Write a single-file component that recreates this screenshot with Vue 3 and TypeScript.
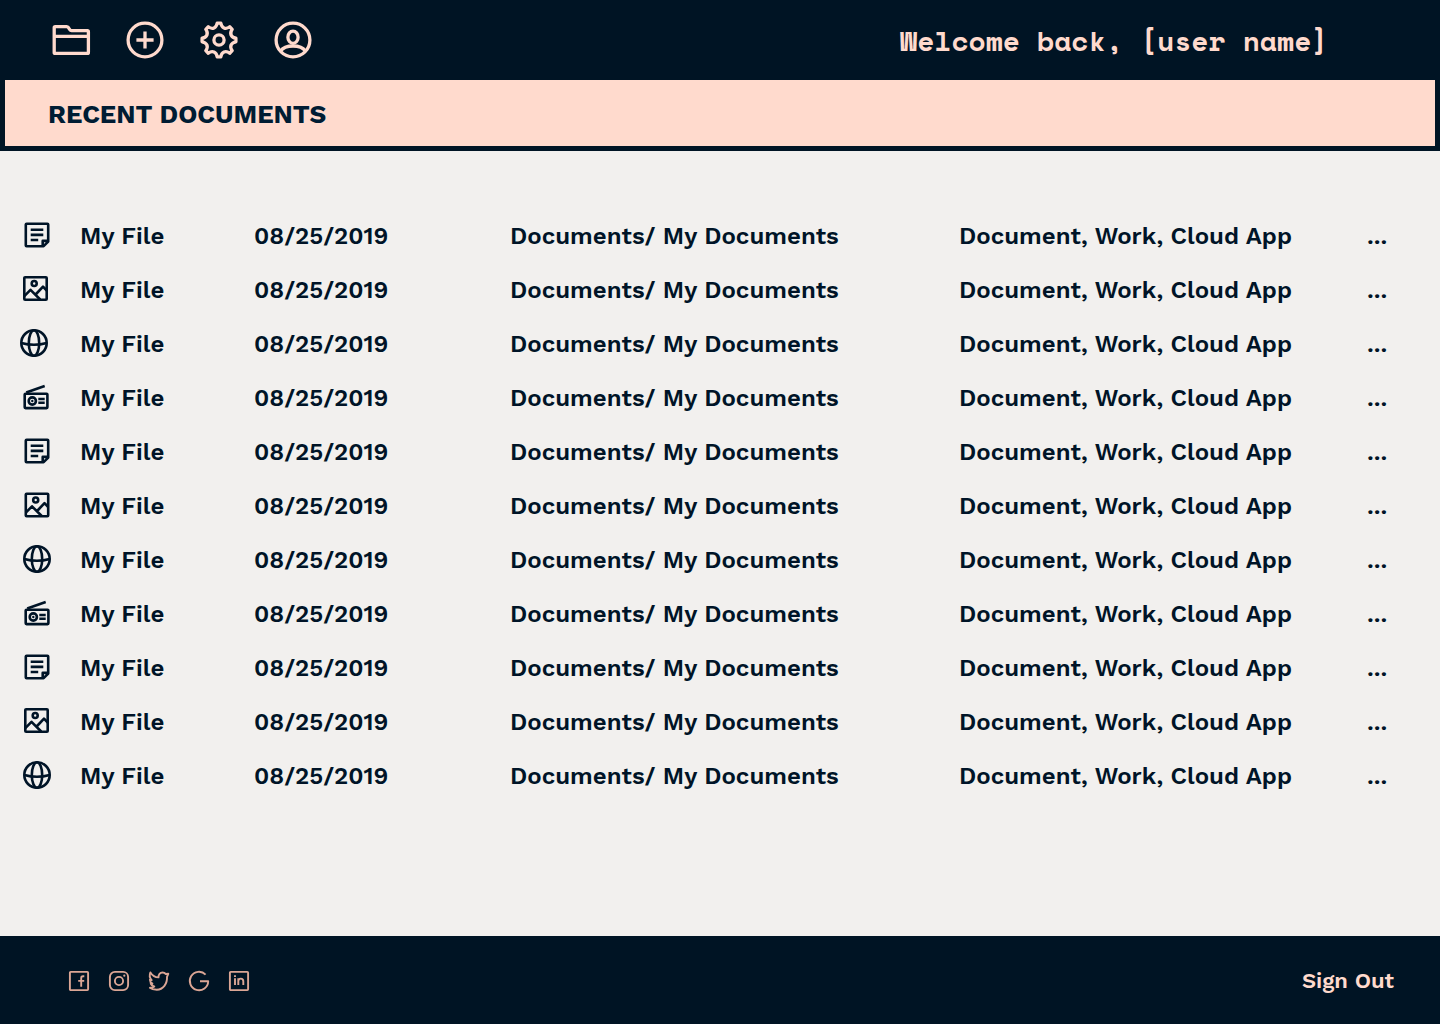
<script setup lang="ts">
type FileKind = 'note' | 'image' | 'web' | 'radio'

interface FileRow {
  kind: FileKind
  dx: number
  dy: number
}

const rows: FileRow[] = [
  { kind: 'note', dx: 0, dy: 0 },
  { kind: 'image', dx: -1.5, dy: -0.5 },
  { kind: 'web', dx: -3, dy: 0 },
  { kind: 'radio', dx: -1, dy: 0.3 },
  { kind: 'note', dx: 0, dy: 0 },
  { kind: 'image', dx: 0, dy: 0 },
  { kind: 'web', dx: 0, dy: 0 },
  { kind: 'radio', dx: 0, dy: 0.3 },
  { kind: 'note', dx: 0, dy: 0 },
  { kind: 'image', dx: -0.5, dy: -0.5 },
  { kind: 'web', dx: 0, dy: 0 },
]

// Eight-toothed cog outline centred in a 48px box
function cogPath(): string {
  const at = (deg: number, r: number) => {
    const a = ((deg - 90) * Math.PI) / 180
    return `${(24 + r * Math.cos(a)).toFixed(2)} ${(24 + r * Math.sin(a)).toFixed(2)}`
  }
  let d = `M${at(-6, 17)}`
  for (let i = 0; i < 8; i++) {
    const t = i * 45
    d += `L${at(t + 6, 17)}C${at(t + 12, 12.2)} ${at(t + 33, 12.2)} ${at(t + 39, 17)}`
  }
  return d + 'Z'
}
const cog = cogPath()
</script>

<template>
  <div class="page">
    <header class="topbar">
      <nav class="tools">
        <svg viewBox="0 0 48 48"><path d="M8.2 10.700H19.600Q20.700 10.700 21.400 11.600L22.800 13.600Q23.400 14.600 24.600 14.600H40.400Q41.400 14.600 41.400 15.600V36.400Q41.400 37.400 40.400 37.400H8.200Q7.200 37.400 7.200 36.400V11.700Q7.200 10.700 8.200 10.700ZM7.200 20.400H41.400" /></svg>
        <svg viewBox="0 0 48 48"><circle cx="24" cy="24" r="16.9" /><path d="M24 15.4V32.6M15.4 24H32.6" /></svg>
        <svg viewBox="0 0 48 48"><path :d="cog" /><circle cx="24" cy="24" r="5.1" /></svg>
        <svg viewBox="0 0 48 48"><circle cx="24" cy="24" r="16.9" /><ellipse cx="24" cy="21.2" rx="5.1" ry="6.1" /><path d="M11.5 35.2C14 31.5 18.5 30 24 30S34 31.5 36.5 35.2" /></svg>
      </nav>
      <p class="welcome">Welcome back, [user name]</p>
    </header>

    <section class="banner"><h1>RECENT DOCUMENTS</h1></section>

    <main class="files">
      <div v-for="(row, i) in rows" :key="i" class="row">
        <svg class="kind" viewBox="0 0 32 32" :style="{ transform: `translate(${row.dx}px, ${row.dy}px)` }">
          <template v-if="row.kind === 'note'">
            <path d="M5.6 4.8H26.400Q27.200 4.800 27.200 5.600V22.6L22.6 27.2H5.600Q4.800 27.200 4.800 26.400V5.600Q4.800 4.800 5.600 4.800ZM21.7 27.2V21.9H27.2" />
            <path d="M9.7 10.7H22.3M9.7 15.9H22.3M9.7 21H17.2" />
          </template>
          <template v-else-if="row.kind === 'image'">
            <rect x="4.8" y="4.8" width="22.4" height="22.4" rx="0.8" />
            <circle cx="14.7" cy="11" r="2.5" />
            <path d="M4.8 23.7L11 17.3L20.7 27M16.6 21.5L23.5 14.2L27.2 18" />
          </template>
          <template v-else-if="row.kind === 'web'">
            <circle cx="16" cy="16" r="12.7" />
            <ellipse cx="16" cy="16" rx="5.2" ry="12.7" />
            <path d="M3.3 16Q16 19.6 28.7 16" />
          </template>
          <template v-else>
            <rect x="4.7" y="12.4" width="22.7" height="14.4" rx="0.8" />
            <path d="M6.2 11.1L24.7 4.6" />
            <circle cx="12.3" cy="19.7" r="3.6" />
            <circle class="dot" cx="12.3" cy="19.7" r="1.2" />
            <path d="M18.3 17.7H24.7M18.3 21.5H24.7" />
          </template>
        </svg>
        <span class="name">My File</span>
        <span class="date">08/25/2019</span>
        <span class="path">Documents/ My Documents</span>
        <span class="tags">Document, Work, Cloud App</span>
        <span class="more">...</span>
      </div>
    </main>

    <footer class="footer">
      <div class="social">
        <svg viewBox="0 0 24 24"><rect x="2.9" y="2.9" width="18.2" height="18.2" rx="0.8" /><path d="M17.3 7.3H16C14.8 7.3 14.2 8 14.2 9.2V17.8M11.2 11.9H17.2" /></svg>
        <svg viewBox="0 0 24 24"><rect x="2.9" y="2.9" width="18.2" height="18.2" rx="5" /><circle cx="12" cy="12" r="4.1" /><circle class="dot" cx="17.3" cy="6.7" r="1.1" /></svg>
        <svg viewBox="0 0 24 24"><path d="M3.4 3.4C5.4 6.5 8.3 8.2 11.5 8.4C11.3 5.3 13.1 3.5 15.5 3.5C17 3.5 18 4.1 18.8 5L21.3 4.8L20 7.8C20.5 14.8 16 20.7 9.8 20.7C7 20.7 4.5 20.2 2.9 18.8C4.4 18.9 6 18.5 7.3 17.5C5.5 17.1 4.2 16.2 3.7 14.7H5.4C3.8 13.8 2.9 12.4 2.9 10.7L4.7 11.1C2.6 9 2.3 6 3.4 3.4Z" /></svg>
        <svg viewBox="0 0 24 24"><path d="M18.6 5.6A9.2 9.2 0 1 0 21.2 12.2H13" /></svg>
        <svg viewBox="0 0 24 24"><rect x="2.9" y="2.9" width="18.2" height="18.2" rx="0.8" /><path d="M8 9.3V16M8 6.3V7.9M11.3 9.3V16M11.3 12.3C11.3 8.7 16.3 8.7 16.3 12.3V16" /></svg>
      </div>
      <a class="signout">Sign Out</a>
    </footer>
  </div>
</template>

<style>
body { margin: 0; }
</style>

<style scoped>
.page {
  width: 1440px;
  height: 1024px;
  display: flex;
  flex-direction: column;
  background: #f2f0ee;
  color: #001427;
  font-family: "Work Sans", Inter, sans-serif;
  overflow: hidden;
}
.topbar {
  height: 80px;
  flex: none;
  box-sizing: border-box;
  padding: 0 111px 0 47px;
  display: flex;
  align-items: center;
  justify-content: space-between;
  background: #001424;
}
.tools { display: flex; gap: 26px; }
.tools svg {
  width: 48px;
  height: 48px;
  fill: none;
  stroke: #ffdacd;
  stroke-width: 3.3;
  stroke-linejoin: round;
}
.welcome {
  margin: 1px 0 0;
  width: 429px;
  color: #ffdacd;
  font: 700 28px/40px "Space Mono", "DejaVu Sans Mono", monospace;
  white-space: nowrap;
}
.banner {
  height: 71px;
  flex: none;
  box-sizing: border-box;
  border: 5px solid #001424;
  border-top: 0;
  padding-left: 43px;
  background: #ffdacd;
  display: flex;
  align-items: center;
}
h1 {
  margin: 1px 0 0;
  color: #001c33;
  font-size: 26px;
  line-height: 32px;
  font-weight: 700;
}
.files { flex: 1; padding: 57px 0 0 21px; }
.row {
  height: 54px;
  display: grid;
  grid-template-columns: 59px 174px 256px 449px 408px 60px;
  align-items: center;
  font-size: 24px;
  line-height: 28px;
  font-weight: 600;
  letter-spacing: 0.03px;
  white-space: nowrap;
}
.row span { padding-top: 2px; }
.kind {
  width: 32px;
  height: 32px;
  fill: none;
  stroke: #001427;
  stroke-width: 2.6;
  stroke-linejoin: round;
}
.kind .dot { fill: #001427; stroke: none; }
.footer {
  height: 88px;
  flex: none;
  box-sizing: border-box;
  padding: 2px 46px 0 67px;
  display: flex;
  align-items: center;
  justify-content: space-between;
  background: #001424;
}
.social { display: flex; gap: 16px; }
.social svg {
  width: 24px;
  height: 24px;
  fill: none;
  stroke: #dba695;
  stroke-width: 1.9;
  stroke-linejoin: round;
}
.social .dot { fill: #dba695; stroke: none; }
.signout {
  color: #ffdacd;
  font-size: 22px;
  line-height: 26px;
  font-weight: 600;
}
</style>
